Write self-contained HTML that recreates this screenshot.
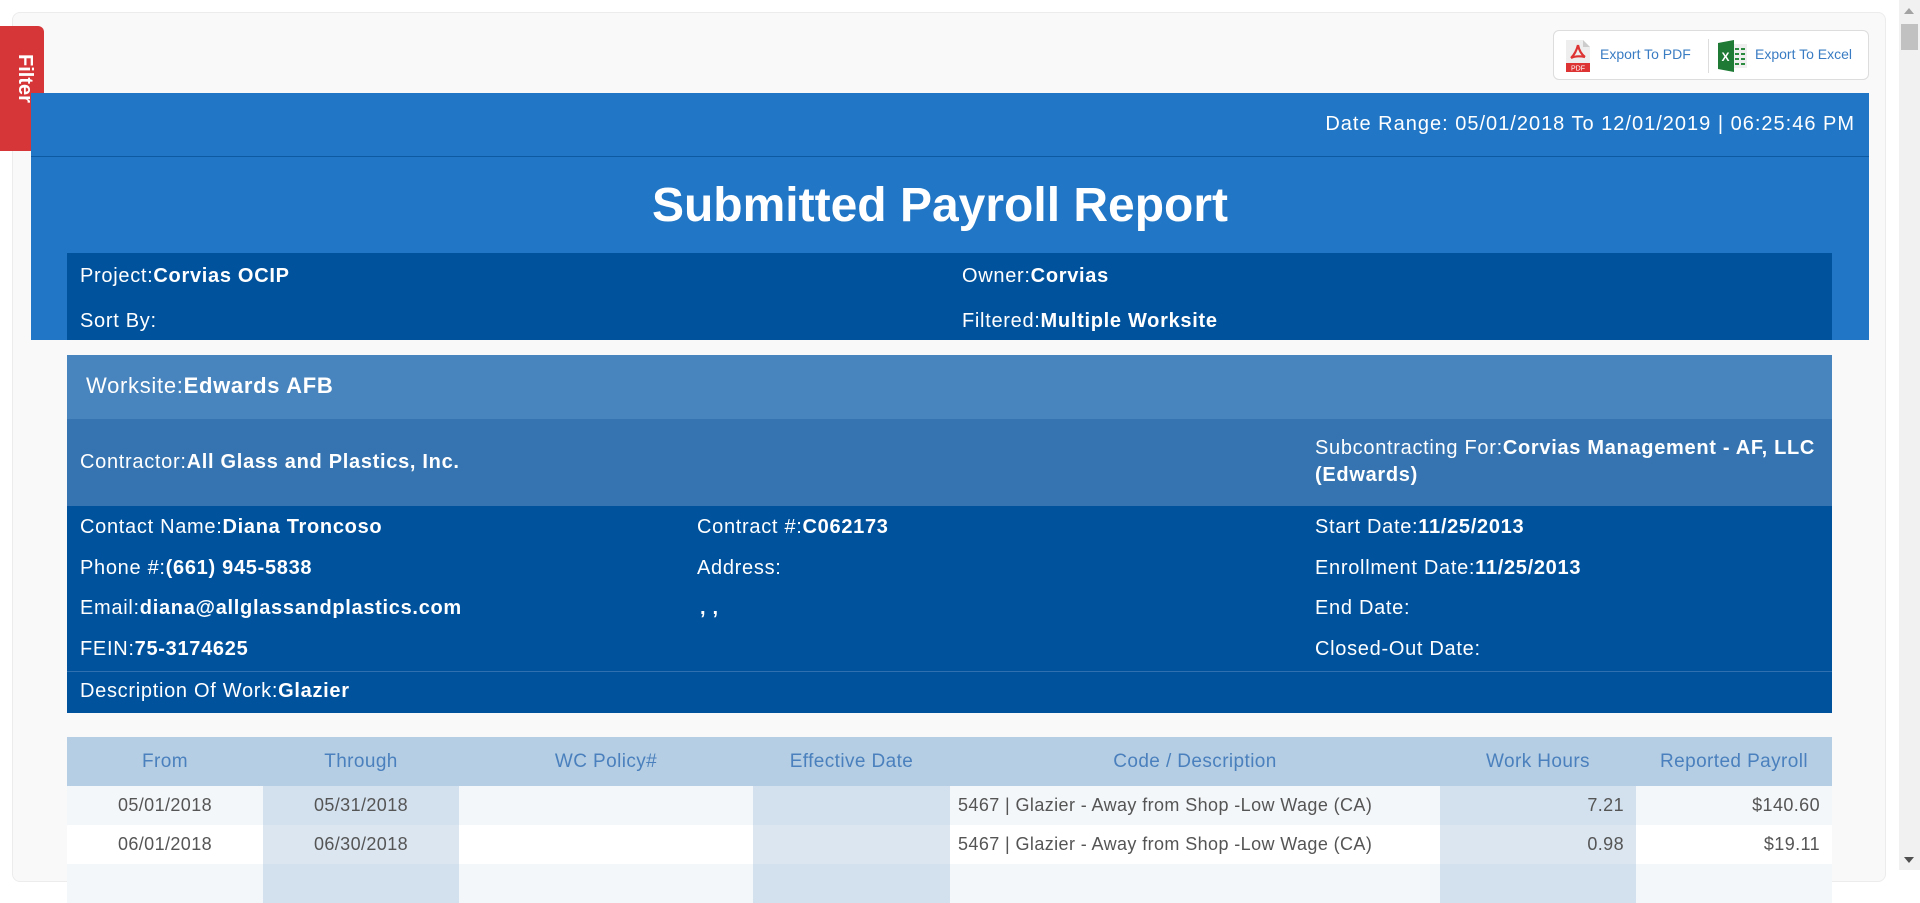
<!DOCTYPE html>
<html><head><meta charset="utf-8"><style>
*{margin:0;padding:0;box-sizing:border-box}
body{width:1920px;height:870px;overflow:hidden;background:#fff;font-family:"Liberation Sans",sans-serif;position:relative}
.abs{position:absolute}
.card{left:12px;top:12px;width:1874px;height:870px;background:#f9f9f9;border:1px solid #ececec;border-radius:8px}
.filter{left:0;top:26px;width:44px;height:125px;background:#d63638;border-radius:0 6px 6px 0;color:#fff;font-weight:bold;font-size:20px}
.filter span{position:absolute;left:12px;top:28px;transform-origin:0 0;transform:translate(24px,0) rotate(90deg)}
.export{left:1553px;top:30px;width:316px;height:50px;background:#fff;border:1px solid #ddd;border-radius:6px;color:#3a7cc3;font-size:14px}
.blue{left:31px;top:93px;width:1838px;height:247px;background:#2176c5}
.t{color:#fff;white-space:nowrap}
.b{font-weight:bold}
.row{position:absolute;font-size:20px;letter-spacing:0.7px;color:#fff;white-space:nowrap}
table{border-collapse:collapse;position:absolute;left:67px;top:737px;width:1765px;font-size:18px;letter-spacing:0.4px;color:#555}
th{background:#b6cee3;color:#4a80bd;font-weight:normal;height:49px;font-size:19px}
td{height:39px;text-align:center}
tr.o td{background:#f4f7fa}
tr.o td.s{background:#d3e1ef}
tr.e td{background:#fff}
tr.e td.s{background:#dbe6f1}
</style></head><body>
<div class="abs card"></div>
<div class="abs filter"><span>Filter</span></div>
<div class="abs export">
 <svg class="abs" style="left:12px;top:9px" width="24" height="32" viewBox="0 0 24 32"><path d="M0 0h17l7 7v25H0z" fill="#eee"/><path d="M17 0v7h7z" fill="#ccc"/><path d="M12 5c-1 4-3 9-7 13M12 5c1 5 3 9 7 12M5 18c4-2 9-2 14-1" stroke="#d33" stroke-width="2.2" fill="none"/><rect x="0" y="23" width="24" height="9" fill="#d33"/><text x="12" y="30.5" font-size="7" fill="#fff" text-anchor="middle" font-family="Liberation Sans">PDF</text></svg>
 <span class="abs" style="left:46px;top:15px">Export To PDF</span>
 <div class="abs" style="left:154px;top:8px;width:1px;height:34px;background:#ddd"></div>
 <svg class="abs" style="left:164px;top:9px" width="30" height="32" viewBox="0 0 30 32"><rect x="12" y="4" width="17" height="24" fill="#eee"/><g fill="#2a8a3e"><rect x="17" y="8" width="4" height="2"/><rect x="23" y="8" width="4" height="2"/><rect x="17" y="13" width="4" height="2"/><rect x="23" y="13" width="4" height="2"/><rect x="17" y="18" width="4" height="2"/><rect x="23" y="18" width="4" height="2"/><rect x="17" y="23" width="4" height="2"/><rect x="23" y="23" width="4" height="2"/></g><path d="M0 3l16-3v32L0 29z" fill="#1e7a35"/><text x="7.5" y="21" font-size="12" fill="#fff" text-anchor="middle" font-weight="bold" font-family="Liberation Sans">X</text></svg>
 <span class="abs" style="left:201px;top:15px">Export To Excel</span>
</div>
<div class="abs blue"></div>
<div class="abs" style="left:31px;top:156px;width:1838px;height:1px;background:#0d5aa2"></div>
<div class="abs t" style="right:65px;top:113px;font-size:20px;letter-spacing:1px">Date Range: 05/01/2018 To 12/01/2019 | 06:25:46 PM</div>
<div class="abs t b" style="left:0;width:1880px;text-align:center;top:178px;font-size:48px">Submitted Payroll Report</div>
<div class="abs" style="left:67px;top:253px;width:1765px;height:87px;background:#00529c"></div>
<div class="row" style="left:80px;top:265px">Project:<b>Corvias OCIP</b></div>
<div class="row" style="left:80px;top:310px">Sort By:</div>
<div class="row" style="left:962px;top:265px">Owner:<b>Corvias</b></div>
<div class="row" style="left:962px;top:310px">Filtered:<b>Multiple Worksite</b></div>

<div class="abs" style="left:67px;top:355px;width:1765px;height:64px;background:#4884bd"></div>
<div class="row" style="left:86px;top:373px;font-size:22px">Worksite:<b>Edwards AFB</b></div>
<div class="abs" style="left:67px;top:419px;width:1765px;height:87px;background:#3574b0"></div>
<div class="row" style="left:80px;top:451px">Contractor:<b>All Glass and Plastics, Inc.</b></div>
<div class="row" style="left:1315px;top:435px;line-height:27px">Subcontracting For:<b>Corvias Management - AF, LLC</b><br><b>(Edwards)</b></div>
<div class="abs" style="left:67px;top:506px;width:1765px;height:207px;background:#00529c"></div>
<div class="abs" style="left:67px;top:671px;width:1765px;height:1px;background:#2f70b0"></div>
<div class="row" style="left:80px;top:516px">Contact Name:<b>Diana Troncoso</b></div>
<div class="row" style="left:80px;top:557px">Phone #:<b>(661) 945-5838</b></div>
<div class="row" style="left:80px;top:597px">Email:<b>diana@allglassandplastics.com</b></div>
<div class="row" style="left:80px;top:638px">FEIN:<b>75-3174625</b></div>
<div class="row" style="left:80px;top:680px">Description Of Work:<b>Glazier</b></div>
<div class="row" style="left:697px;top:516px">Contract #:<b>C062173</b></div>
<div class="row" style="left:697px;top:557px">Address:</div>
<div class="row" style="left:700px;top:597px"><b>, ,</b></div>
<div class="row" style="left:1315px;top:516px">Start Date:<b>11/25/2013</b></div>
<div class="row" style="left:1315px;top:557px">Enrollment Date:<b>11/25/2013</b></div>
<div class="row" style="left:1315px;top:597px">End Date:</div>
<div class="row" style="left:1315px;top:638px">Closed-Out Date:</div>

<table>
<colgroup><col style="width:196px"><col style="width:196px"><col style="width:294px"><col style="width:197px"><col style="width:490px"><col style="width:196px"><col style="width:196px"></colgroup>
<tr><th>From</th><th>Through</th><th>WC Policy#</th><th>Effective Date</th><th>Code / Description</th><th>Work Hours</th><th>Reported Payroll</th></tr>
<tr class="o"><td>05/01/2018</td><td class="s">05/31/2018</td><td></td><td class="s"></td><td style="text-align:left;padding-left:8px">5467 | Glazier - Away from Shop -Low Wage (CA)</td><td class="s" style="text-align:right;padding-right:12px">7.21</td><td style="text-align:right;padding-right:12px">$140.60</td></tr>
<tr class="e"><td>06/01/2018</td><td class="s">06/30/2018</td><td></td><td class="s"></td><td style="text-align:left;padding-left:8px">5467 | Glazier - Away from Shop -Low Wage (CA)</td><td class="s" style="text-align:right;padding-right:12px">0.98</td><td style="text-align:right;padding-right:12px">$19.11</td></tr>
<tr class="o"><td></td><td class="s"></td><td></td><td class="s"></td><td></td><td class="s"></td><td></td></tr>
</table>
<div class="abs" style="left:1899px;top:0;width:21px;height:870px;background:#f1f1f1"></div>
<div class="abs" style="left:1901px;top:24px;width:17px;height:26px;background:#c1c1c1"></div>
<div class="abs" style="left:1904px;top:8px;width:0;height:0;border-left:5px solid transparent;border-right:5px solid transparent;border-bottom:6px solid #a3a3a3"></div>
<div class="abs" style="left:1904px;top:857px;width:0;height:0;border-left:5px solid transparent;border-right:5px solid transparent;border-top:6px solid #505050"></div>
</body></html>
